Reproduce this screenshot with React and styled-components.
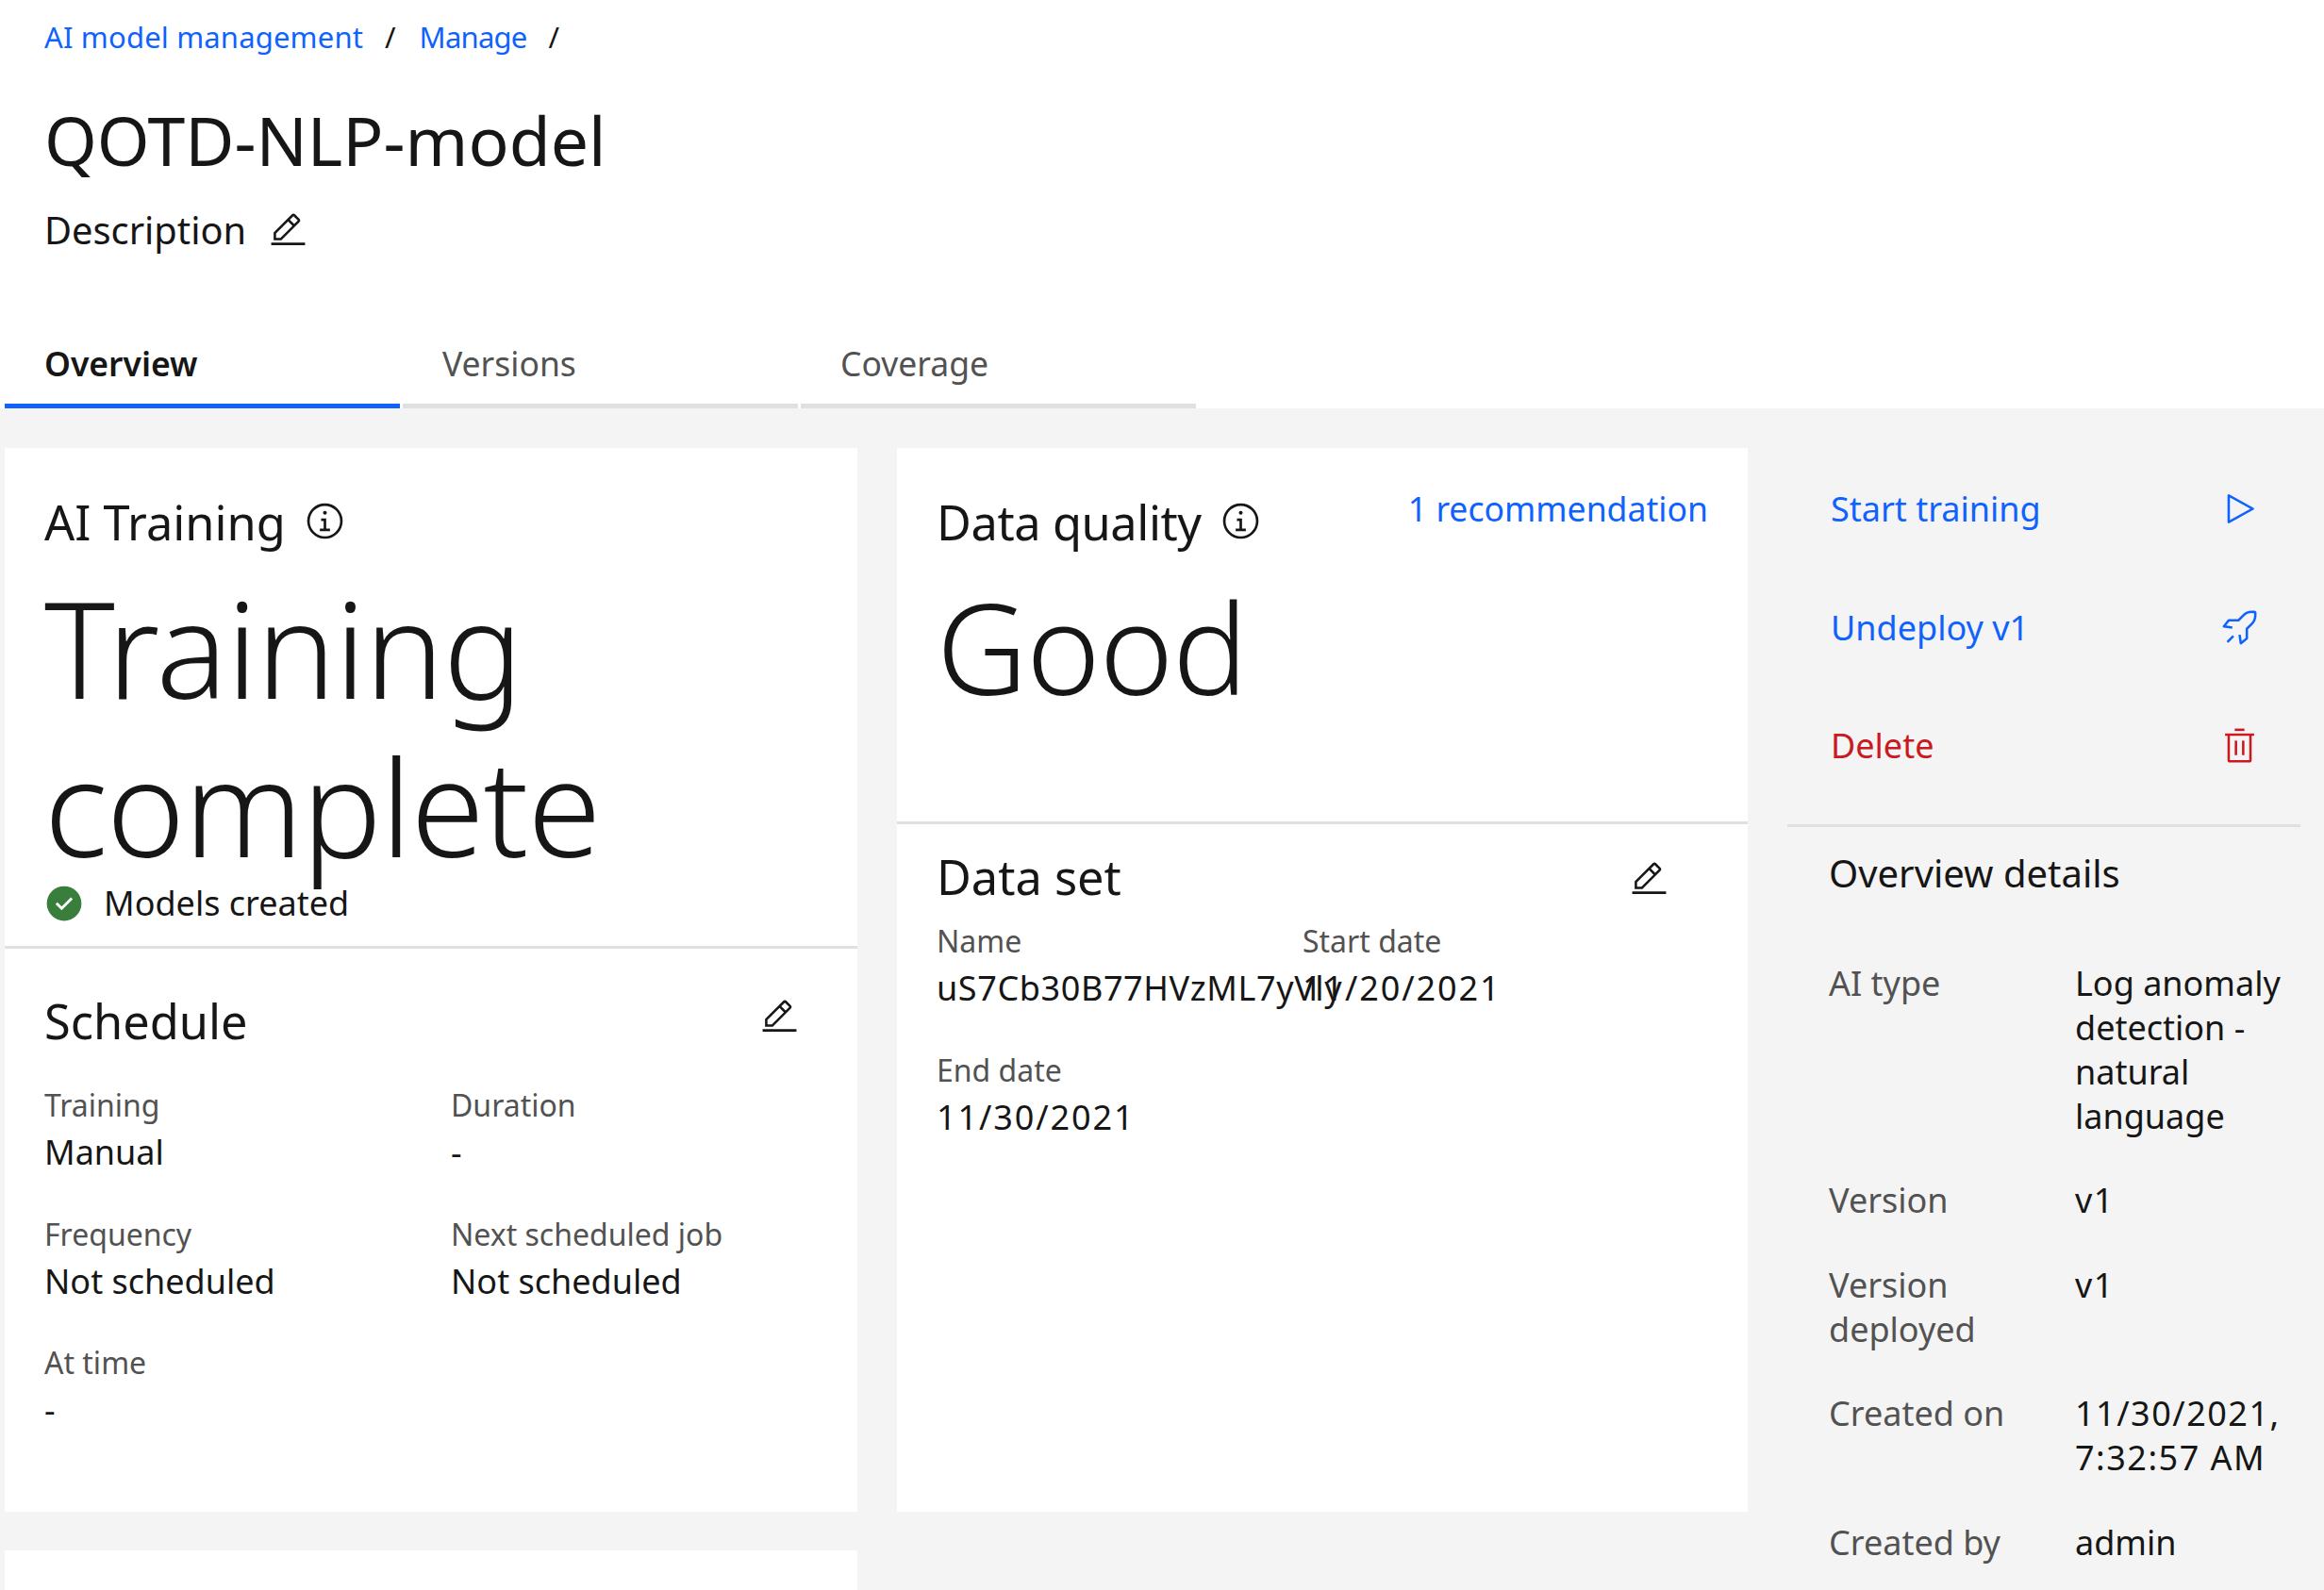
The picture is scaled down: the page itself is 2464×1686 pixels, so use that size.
import React from "react";
import styled, { createGlobalStyle } from "styled-components";

const Global = createGlobalStyle`
  html, body { margin: 0; padding: 0; background: #f4f4f4; }
  body { font-family: "Noto Sans", "Open Sans", sans-serif; color: #161616; }
  * { box-sizing: border-box; }
`;

const Page = styled.div`
  width: 2464px;
  height: 1686px;
  overflow: hidden;
  background: #f4f4f4;
`;
const Header = styled.header`
  height: 433px;
  background: #fff;
  padding-top: 16px;
  display: flex;
  flex-direction: column;
`;
const Crumbs = styled.nav`
  display: flex;
  padding-left: 47px;
  font-size: 31px;
  line-height: 46px;
`;
const Crumb = styled.a`
  color: #0f62fe;
  letter-spacing: ${p => p.$track}px;
`;
const Slash = styled.span`
  margin: 0 25px 0 23px;
  color: #161616;
`;
const Title = styled.h1`
  margin: 42px 0 0 47px;
  font-size: 71.5px;
  line-height: 90px;
  font-weight: 400;
`;
const DescRow = styled.div`
  margin: 27px 0 0 47px;
  display: flex;
  align-items: center;
  gap: 24px;
  font-size: 39.8px;
  line-height: 46px;
`;
const Tabs = styled.div`
  margin: 70px 0 0 5px;
  display: flex;
  gap: 3px;
`;
const Tab = styled.div`
  width: 419px;
  height: 96px;
  padding: 25px 0 0 42px;
  font-size: 35.5px;
  line-height: 46px;
  font-weight: ${p => (p.$active ? 600 : 400)};
  color: ${p => (p.$active ? "#161616" : "#525252")};
  border-bottom: 5px solid ${p => (p.$active ? "#0f62fe" : "#e0e0e0")};
`;
const Content = styled.main`
  display: grid;
  grid-template-columns: 904px 902px 1fr;
  column-gap: 42px;
  padding: 42px 0 0 5px;
`;
const LeftColumn = styled.div`
  display: flex;
  flex-direction: column;
  gap: 41px;
`;
const Card = styled.section`
  background: #fff;
  height: ${p => p.$h}px;
`;
const CardTop = styled.div`
  padding: 49px 42px 0;
  height: ${p => p.$h}px;
  border-bottom: 3px solid #e0e0e0;
`;
const HeadRow = styled.div`
  display: flex;
  align-items: center;
`;
const Heading = styled.h2`
  margin: 0;
  font-size: 50.5px;
  line-height: 60px;
  font-weight: 400;
  letter-spacing: ${p => p.$track || 0}px;
`;
const InfoWrap = styled.span`
  display: inline-flex;
  margin: -4px 0 0 20px;
`;
const RecLink = styled.a`
  margin-left: auto;
  margin-top: -30px;
  color: #0f62fe;
  font-size: 35.6px;
  line-height: 46px;
`;
const Big = styled.div`
  margin-top: 18px;
  font-size: ${p => p.$size}px;
  line-height: 168px;
  font-weight: 300;
  letter-spacing: -1px;
`;
const Status = styled.div`
  margin-top: -3px;
  display: flex;
  align-items: center;
  gap: 21px;
  font-size: 36px;
  line-height: 46px;
`;
const Section = styled.div`
  padding: ${p => p.$top}px 42px 0;
`;
const SectionHead = styled.div`
  display: flex;
  align-items: center;
  justify-content: space-between;
  padding-right: ${p => p.$pr}px;
`;
const EditSlot = styled.span`
  display: inline-flex;
  margin-top: ${p => p.$shift}px;
`;
const Fields = styled.div`
  margin-top: ${p => p.$top}px;
  display: grid;
  grid-template-columns: ${p => p.$col}px 1fr;
  row-gap: 43.5px;
`;
const Field = styled.div`
  display: flex;
  flex-direction: column;
  gap: 7px;
  min-width: 0;
`;
const Label = styled.div`
  font-size: 32px;
  line-height: 40px;
  color: #525252;
`;
const Value = styled.div`
  font-size: 36px;
  line-height: 46px;
  white-space: nowrap;
  letter-spacing: ${p => p.$track || 0}px;
`;
const Side = styled.aside`
  padding-top: 2px;
`;
const Action = styled.a`
  height: 125.5px;
  padding: 0 69px 0 46px;
  display: flex;
  align-items: center;
  justify-content: space-between;
  font-size: 36px;
  color: ${p => (p.$danger ? "#c91a22" : "#0f62fe")};
`;
const SideRule = styled.hr`
  margin: 20px 0 0;
  width: 544px;
  height: 3px;
  border: 0;
  background: #e0e0e0;
`;
const Details = styled.div`
  padding: 19px 0 0 44px;
`;
const DetailHeading = styled.h3`
  margin: 0 0 63px;
  font-size: 40px;
  line-height: 60px;
  font-weight: 400;
`;
const DetailGrid = styled.dl`
  margin: 0;
  display: grid;
  grid-template-columns: 261px 260px;
  row-gap: 42.5px;
  font-size: 36px;
  line-height: 47px;
`;
const Term = styled.dt`
  color: #525252;
`;
const Desc = styled.dd`
  margin: 0;
  letter-spacing: ${p => p.$track || 0}px;
  max-width: 240px;
`;

const Icon = ({ size = 41, color = "#161616", children }) => (
  <svg width={size} height={size} viewBox="0 0 32 32" fill={color}>{children}</svg>
);
const EditIcon = () => (
  <Icon>
    <path d="M2 26h28v2H2zM25.4 9c.8-.8.8-2 0-2.8l-3.6-3.6c-.8-.8-2-.8-2.8 0l-15 15V24h6.4l15-15zm-5-5L24 7.6l-3 3L17.4 7l3-3zM6 22v-3.6l10-10 3.6 3.6-10 10H6z" />
  </Icon>
);
const InfoIcon = () => (
  <Icon size={43}>
    <polygon points="17 22 17 14 13 14 13 16 15 16 15 22 12 22 12 24 20 24 20 22 17 22" />
    <path d="M16,8a1.5,1.5,0,1,0,1.5,1.5A1.5,1.5,0,0,0,16,8Z" />
    <path d="M16,30A14,14,0,1,1,30,16,14,14,0,0,1,16,30ZM16,4A12,12,0,1,0,28,16,12,12,0,0,0,16,4Z" />
  </Icon>
);
const CheckIcon = () => (
  <Icon size={42} color="#3a7e3c">
    <circle cx="16" cy="16" r="14" fill="#fff" />
    <path d="M16,2A14,14,0,1,0,30,16,14,14,0,0,0,16,2ZM14,21.5908l-5-5L10.5906,15,14,18.4092,21.41,11l1.5957,1.5859Z" />
  </Icon>
);
const PlayIcon = () => (
  <Icon color="#0f62fe">
    <path d="M7,28a1,1,0,0,1-1-1V5a1,1,0,0,1,1.4819-.8763l20,11a1,1,0,0,1,0,1.7525l-20,11A1.0005,1.0005,0,0,1,7,28ZM8,6.6909V25.3088L24.9248,16Z" />
  </Icon>
);
const RocketIcon = () => (
  <Icon color="#0f62fe">
    <path d="M5.2 27.3l5-5 1.4 1.4-5 5z" />
    <path d="M17,30a1,1,0,0,1-.37-.07,1,1,0,0,1-.62-.79l-1-7,2-.28.75,5.27L21,24.52V17a1,1,0,0,1,.29-.71l4.07-4.07A8.94,8.94,0,0,0,28,5.86V4H26.14a8.94,8.94,0,0,0-6.36,2.64l-4.07,4.07A1,1,0,0,1,15,11H7.48L4.87,14.26l5.27.75-.28,2-7-1a1,1,0,0,1-.79-.62,1,1,0,0,1,.15-1l4-5A1,1,0,0,1,7,9h7.59l3.77-3.78A10.92,10.92,0,0,1,26.14,2H28a2,2,0,0,1,2,2V5.86a10.92,10.92,0,0,1-3.22,7.78L23,17.41V25a1,1,0,0,1-.38.78l-5,4A1,1,0,0,1,17,30Z" />
  </Icon>
);
const TrashIcon = () => (
  <Icon color="#c91a22">
    <rect x="12" y="12" width="2" height="12" />
    <rect x="18" y="12" width="2" height="12" />
    <path d="M4,6V8H6V28a2,2,0,0,0,2,2H24a2,2,0,0,0,2-2V8h2V6ZM8,28V8H24V28Z" />
    <rect x="12" y="2" width="8" height="2" />
  </Icon>
);

const F = ({ label, value, track }) => (
  <Field>
    <Label>{label}</Label>
    <Value $track={track}>{value}</Value>
  </Field>
);

export default function App() {
  return (
    <Page>
      <Global />
      <Header>
        <Crumbs>
          <Crumb $track={0.16}>AI model management</Crumb>
          <Slash>/</Slash>
          <Crumb $track={-0.8}>Manage</Crumb>
          <Slash>/</Slash>
        </Crumbs>
        <Title>QOTD-NLP-model</Title>
        <DescRow>
          Description
          <EditIcon />
        </DescRow>
        <Tabs>
          <Tab $active>Overview</Tab>
          <Tab>Versions</Tab>
          <Tab>Coverage</Tab>
        </Tabs>
      </Header>
      <Content>
        <LeftColumn>
          <Card $h={1128}>
            <CardTop $h={531}>
              <HeadRow>
                <Heading>AI Training</Heading>
                <InfoWrap><InfoIcon /></InfoWrap>
              </HeadRow>
              <Big $size={141}>Training complete</Big>
              <Status>
                <CheckIcon />
                Models created
              </Status>
            </CardTop>
            <Section $top={47}>
              <SectionHead $pr={20}>
                <Heading>Schedule</Heading>
                <EditSlot $shift={-10}><EditIcon /></EditSlot>
              </SectionHead>
              <Fields $top={39} $col={431}>
                <F label="Training" value="Manual" />
                <F label="Duration" value="-" />
                <F label="Frequency" value="Not scheduled" />
                <F label="Next scheduled job" value="Not scheduled" />
                <F label="At time" value="-" />
              </Fields>
            </Section>
          </Card>
          <Card $h={200} />
        </LeftColumn>
        <Card $h={1128}>
          <CardTop $h={399}>
            <HeadRow>
              <Heading $track={-0.4}>Data quality</Heading>
              <InfoWrap><InfoIcon /></InfoWrap>
              <RecLink>1 recommendation</RecLink>
            </HeadRow>
            <Big $size={133}>Good</Big>
          </CardTop>
          <Section $top={26}>
            <SectionHead $pr={42}>
              <Heading>Data set</Heading>
              <EditSlot $shift={4}><EditIcon /></EditSlot>
            </SectionHead>
            <Fields $top={18} $col={388}>
              <F label="Name" value="uS7Cb30B77HVzML7yVly" track={0.6} />
              <F label="Start date" value="11/20/2021" track={1.9} />
              <F label="End date" value="11/30/2021" track={1.9} />
            </Fields>
          </Section>
        </Card>
        <Side>
          <Action>Start training<PlayIcon /></Action>
          <Action>Undeploy v1<RocketIcon /></Action>
          <Action $danger>Delete<TrashIcon /></Action>
          <SideRule />
          <Details>
            <DetailHeading>Overview details</DetailHeading>
            <DetailGrid>
              <Term>AI type</Term>
              <Desc>Log anomaly detection - natural language</Desc>
              <Term>Version</Term>
              <Desc $track={1.5}>v1</Desc>
              <Term>Version deployed</Term>
              <Desc $track={1.5}>v1</Desc>
              <Term>Created on</Term>
              <Desc $track={1.5}>11/30/2021, 7:32:57 AM</Desc>
              <Term>Created by</Term>
              <Desc>admin</Desc>
            </DetailGrid>
          </Details>
        </Side>
      </Content>
    </Page>
  );
}
